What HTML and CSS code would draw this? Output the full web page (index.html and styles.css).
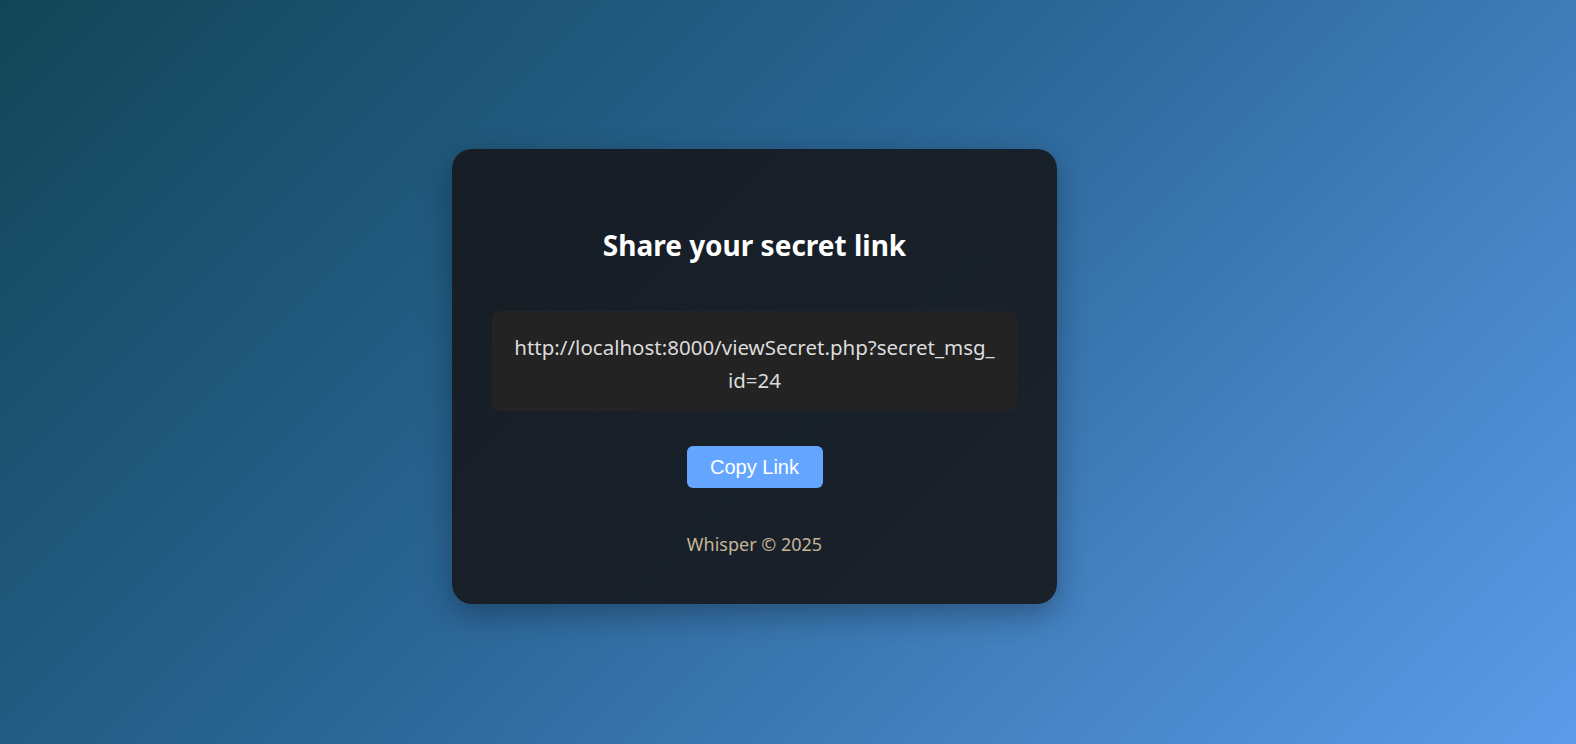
FILE: index.html
```html
<!DOCTYPE html>
<html lang="en">
<head>
<meta charset="utf-8">
<title>Whisper</title>
<link rel="stylesheet" href="styles.css">
</head>
<body>
<main class="page">
  <section class="card">
    <h2 class="title">Share your secret link</h2>
    <div class="link-box">http://localhost:8000/viewSecret.php?secret_msg_id=24</div>
    <button class="copy-btn" type="button">Copy Link</button>
    <footer class="footer">Whisper © 2025</footer>
  </section>
</main>
</body>
</html>
```
FILE: styles.css
```css
* { box-sizing: border-box; }
html, body { margin: 0; height: 100%; }
body {
  background: linear-gradient(135deg, #114556 0%, #2a6595 45%, #5b9cea 100%);
  font-family: "Noto Sans", "Open Sans", sans-serif;
}
.page {
  min-height: 100vh;
  display: flex;
  align-items: center;
  justify-content: center;
  padding: 9px 67px 0 0;
}
.card {
  width: 605px;
  height: 455px;
  background: linear-gradient(135deg, #161d25 0%, #18202a 60%, #1a212a 100%);
  border-radius: 20px;
  box-shadow: 0 10px 30px rgba(0, 0, 0, 0.3);
  padding: 77px 40px 0;
  display: flex;
  flex-direction: column;
  align-items: center;
}
.title {
  margin: 0;
  height: 38px;
  line-height: 38px;
  font-size: 28px;
  font-weight: 700;
  color: #ffffff;
}
.link-box {
  margin-top: 47px;
  width: 100%;
  height: 100px;
  background: #232323;
  border-radius: 8px;
  padding: 20px 22px 0;
  color: #dcdcdc;
  font-size: 20.5px;
  line-height: 33px;
  text-align: center;
  word-break: break-all;
}
.copy-btn {
  margin-top: 35px;
  width: 136px;
  height: 42px;
  border: none;
  border-radius: 6px;
  background: #64a6ff;
  color: #ffffff;
  font-family: "Liberation Sans", Arial, sans-serif;
  font-size: 20px;
  padding: 0;
}
.footer {
  margin-top: 44px;
  line-height: 24px;
  font-size: 18px;
  color: #c6b596;
}
```
